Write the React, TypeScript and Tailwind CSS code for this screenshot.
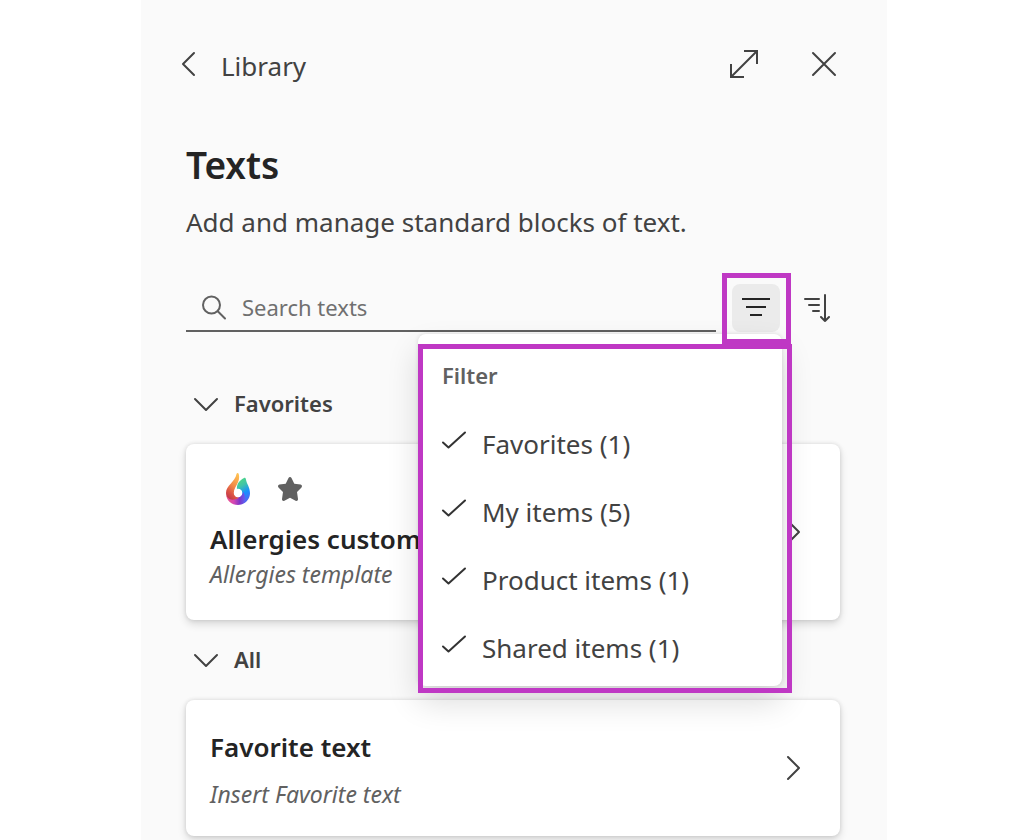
import React, { useState } from "react";

type StrokeIconProps = {
  path: string;
  width: number;
  height: number;
  className?: string;
  sharp?: boolean;
};

function StrokeIcon({ path, width, height, className, sharp = false }: StrokeIconProps) {
  return (
    <svg
      aria-hidden="true"
      width={width}
      height={height}
      viewBox={`0 0 ${width} ${height}`}
      fill="none"
      stroke="currentColor"
      strokeWidth={2}
      strokeLinejoin={sharp ? "miter" : "round"}
      strokeLinecap={sharp ? "butt" : "round"}
      className={className}
    >
      <path d={path} />
    </svg>
  );
}

function FlameLogo() {
  return (
    <svg aria-hidden="true" width="24" height="32" viewBox="0 0 24 32">
      <defs>
        <linearGradient id="flame-left" x1="0.8" y1="0" x2="0.35" y2="1">
          <stop offset="0" stopColor="#ffc252" />
          <stop offset="0.5" stopColor="#f28a48" />
          <stop offset="0.8" stopColor="#db5344" />
          <stop offset="1" stopColor="#c43a4a" />
        </linearGradient>
        <linearGradient id="flame-right" x1="0.3" y1="0" x2="0.6" y2="1">
          <stop offset="0" stopColor="#4fd886" />
          <stop offset="0.3" stopColor="#3fc4a8" />
          <stop offset="0.62" stopColor="#1690ff" />
          <stop offset="1" stopColor="#5a60f0" />
        </linearGradient>
        <linearGradient id="flame-base" x1="0" y1="0" x2="1" y2="0">
          <stop offset="0" stopColor="#f0588a" />
          <stop offset="0.4" stopColor="#d446b4" />
          <stop offset="0.7" stopColor="#7f35c8" />
          <stop offset="1" stopColor="#5b62f5" />
        </linearGradient>
      </defs>
      <path
        d="M18 5C19 4.500 19.700 5.200 19.900 6.200C20.500 10.500 24 14 24 20C24 24.500 21.700 28.300 18 30.300L12 26C14 25 16.200 23 16.200 20C16.200 17.600 14 15.600 11 16.500C10.400 11.500 13 7.500 18 5Z"
        fill="url(#flame-right)"
      />
      <path
        d="M0.200 21.500C1.500 26 5 25 9 23.500C13 25 16.500 23 17.300 18.800C19.800 23.500 19.800 27.500 18 30.300C16.200 31.400 14.200 32 12 32C5.500 32 0.500 27.500 0.200 21.500Z"
        fill="url(#flame-base)"
      />
      <path
        d="M10.600 0.700C11.100 -0.200 12.400 -0.200 12.700 0.900C13.500 3.500 13.200 6.500 12 9.200C10.300 13 7.800 16 7.900 20C8.300 22.700 10.300 24.500 13 24.500C10.500 26.500 6.500 27.300 3.500 26C1 24.600 0 22.500 0 20C0 12 9 9.500 10.600 0.700Z"
        fill="url(#flame-left)"
      />
      <circle cx="12" cy="20" r="4.200" fill="#fff" />
    </svg>
  );
}

function StarIcon() {
  return (
    <svg aria-label="Favorite" role="img" width="26" height="26" viewBox="0 0 26 26" className="text-[#616161]">
      <path
        d="M11.500 1.900C12.100 0.700 13.900 0.700 14.500 1.900L17.300 7.700L23.600 8.600C25 8.800 25.500 10.500 24.500 11.500L20 16L21 22.900C21.200 24.300 19.800 25.300 18.600 24.700L13 21.700L7.400 24.700C6.200 25.300 4.800 24.300 5 22.900L6 16L1.500 11.500C0.500 10.500 1 8.800 2.400 8.600L8.700 7.700Z"
        fill="currentColor"
      />
    </svg>
  );
}

function SectionHeading({ children }: { children: React.ReactNode }) {
  return (
    <h2>
      <button
        type="button"
        aria-expanded="true"
        className="flex h-20 items-center gap-3.5 pl-1.5 text-[22px] leading-8 font-semibold text-[#424242]"
      >
        <StrokeIcon width={28} height={16} path="M3 3L14 14L25 3" />
        <span className="pb-0.5">{children}</span>
      </button>
    </h2>
  );
}

type TextCardProps = {
  title: string;
  subtitle: string;
  favorite?: boolean;
};

function TextCard({ title, subtitle, favorite }: TextCardProps) {
  return (
    <button
      type="button"
      className={`flex w-full items-center rounded-lg bg-white pr-[38px] pl-6 text-left shadow-[0_4px_8px_rgba(0,0,0,0.14),0_0_4px_rgba(0,0,0,0.12)] ${
        favorite ? "h-44" : "h-[136px]"
      }`}
    >
      <span className={`flex flex-1 flex-col ${favorite ? "gap-0" : "gap-3 pt-1"}`}>
        {favorite && (
          <span className="mb-4 flex h-8 items-center gap-[27px] pl-4">
            <FlameLogo />
            <StarIcon />
          </span>
        )}
        <span className="text-[26px] leading-9 font-semibold text-[#242424]">{title}</span>
        <span className="text-[23px] leading-[34px] text-[#616161] italic">{subtitle}</span>
      </span>
      <StrokeIcon width={16} height={28} path="M2 3L13 14L2 25" className="text-[#424242]" />
    </button>
  );
}

const FILTERS = [
  { id: "favorites", label: "Favorites", count: 1 },
  { id: "mine", label: "My items", count: 5 },
  { id: "product", label: "Product items", count: 1 },
  { id: "shared", label: "Shared items", count: 1 },
];

function FilterMenu() {
  const [hidden, setHidden] = useState<string[]>([]);
  const toggle = (id: string) =>
    setHidden((ids) => (ids.includes(id) ? ids.filter((x) => x !== id) : [...ids, id]));

  return (
    <div className="absolute top-[50px] -right-0.5 z-10 w-[364px] rounded-lg bg-white pt-2 pb-1 shadow-[0_16px_32px_rgba(0,0,0,0.14),0_0_4px_rgba(0,0,0,0.12)]">
      <fieldset>
        <legend className="flex h-[68px] items-center pb-0.5 pl-6 text-[22px] leading-8 font-semibold text-[#616161]">
          Filter
        </legend>
        {FILTERS.map(({ id, label, count }) => (
          <label
            key={id}
            htmlFor={`filter-${id}`}
            className="flex h-[68px] items-center gap-[15px] pl-[23px] text-[26px] leading-9 text-[#424242]"
          >
            <input
              id={`filter-${id}`}
              type="checkbox"
              checked={!hidden.includes(id)}
              onChange={() => toggle(id)}
              className="peer sr-only"
            />
            <StrokeIcon
              width={26}
              height={20}
              path="M2 12.500L7.500 17.500L24 2.500"
              className="invisible mb-2 text-[#333333] peer-checked:visible"
            />
            {label} ({count})
          </label>
        ))}
      </fieldset>
      <div className="pointer-events-none absolute top-2.5 -right-2.5 -bottom-[7px] left-0 border-5 border-[#bf38c4]" />
    </div>
  );
}

export default function App() {
  return (
    <div className="min-h-screen bg-white pr-[137px] pl-[141px] font-['Noto_Sans','Open_Sans',sans-serif]">
      <main className="min-h-screen bg-[#fafafa] pr-[47px] pb-1 pl-[45px]">
        <header className="flex h-32 items-center text-[#424242]">
          <button type="button" aria-label="Back" className="-ml-1.5">
            <StrokeIcon width={16} height={28} path="M14 3L3 14L14 25" />
          </button>
          <span className="flex-1 pt-1 pl-[25px] text-[26px] leading-9">Library</span>
          <button type="button" aria-label="Expand">
            <StrokeIcon sharp width={30} height={30} path="M15 2H28V15M2 15V28H15M28 2L2 28" />
          </button>
          <button type="button" aria-label="Close" className="mr-0.5 ml-[51px]">
            <StrokeIcon width={28} height={28} path="M3 3L25 25M25 3L3 25" />
          </button>
        </header>

        <h1 className="pt-3 text-[37px] leading-[50px] font-semibold text-[#242424]">Texts</h1>
        <p className="pt-3.5 text-[26px] leading-9 text-[#424242]">Add and manage standard blocks of text.</p>

        <div className="mt-11 mb-8 flex h-12">
          <label
            htmlFor="search-texts"
            className="mr-4 flex min-w-0 flex-1 items-center gap-3.5 border-b-2 border-[#616161] pl-3.5 text-[#616161]"
          >
            <StrokeIcon width={28} height={28} path="M20 12A8 8 0 1 1 3 12A8 8 0 1 1 20 12M17.500 18L25 25.500" />
            <input
              id="search-texts"
              type="text"
              aria-label="Search texts"
              placeholder="Search texts"
              className="min-w-0 flex-1 bg-transparent text-[22px] leading-8 outline-none placeholder:text-[#707070]"
            />
          </label>
          <div className="relative mr-3">
            <button
              type="button"
              aria-label="Filter"
              aria-expanded="true"
              className="flex size-12 items-center justify-center rounded-lg bg-[#ebebeb] pb-0.5 text-[#242424]"
            >
              <StrokeIcon sharp width={30} height={20} path="M1 2H29M5 10H25M9 18H21" />
            </button>
            <FilterMenu />
            <div className="pointer-events-none absolute -top-[11px] -right-[11px] -bottom-3 -left-2.5 z-20 border-5 border-[#bf38c4]" />
          </div>
          <button type="button" aria-label="Sort" className="flex size-12 items-center justify-center text-[#424242]">
            <StrokeIcon width={28} height={30} path="M3 6H17M7 12H17M11 18H17M23 2V28M19 24L23 28L27 24" />
          </button>
        </div>

        <section>
          <SectionHeading>Favorites</SectionHeading>
          <TextCard title="Allergies custom" subtitle="Allergies template" favorite />
        </section>
        <section>
          <SectionHeading>All</SectionHeading>
          <TextCard title="Favorite text" subtitle="Insert Favorite text" />
        </section>
      </main>
    </div>
  );
}
